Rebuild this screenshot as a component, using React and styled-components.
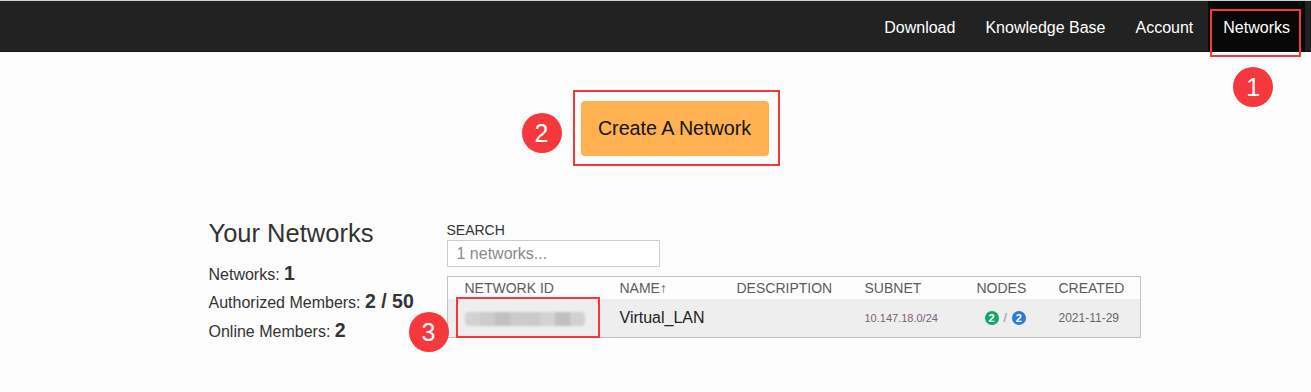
import React from 'react'
import styled, { createGlobalStyle } from 'styled-components'

const GlobalStyle = createGlobalStyle`
  html, body {
    margin: 0;
    padding: 0;
    background: #fcfcfc;
    font-family: 'Liberation Sans', Arial, sans-serif;
    color: #333;
  }
  body {
    min-height: 100vh;
  }
`

const NavBar = styled.nav`
  display: flex;
  justify-content: flex-end;
  height: 50px;
  padding-right: 6px;
  background: #222;
  border-top: 1px solid #cfcfcf;
  border-bottom: 1px solid #111;
`

const NavItem = styled.a`
  position: relative;
  display: flex;
  align-items: center;
  padding: 3px 15px 0;
  font-size: 16px;
  color: #fff;
  text-decoration: none;
  background: ${p => (p.$active ? '#080808' : 'transparent')};
`

// annotation overlay: red frame + numbered badge
const Mark = styled.div`
  position: relative;
  display: inline-flex;
  justify-self: start;
`

const Frame = styled.div`
  position: absolute;
  z-index: 2;
  top: ${p => p.$t}px;
  left: ${p => p.$l}px;
  right: ${p => p.$r}px;
  bottom: ${p => p.$b}px;
  border: 2px solid #f2383a;
  pointer-events: none;
`

const Badge = styled.div`
  position: absolute;
  z-index: 2;
  left: ${p => p.$x - 20}px;
  top: ${p => p.$y - 20}px;
  width: 40px;
  height: 40px;
  border-radius: 50%;
  background: #f5383b;
  color: #fff;
  font-size: 25px;
  line-height: 40px;
  text-align: center;
`

const Hero = styled.section`
  display: flex;
  justify-content: center;
  padding: 49px 0 0 38px;
`

const CreateButton = styled.button`
  width: 188px;
  height: 55px;
  border: none;
  border-radius: 4px;
  background: #ffb152;
  color: #141414;
  font-family: inherit;
  font-size: 19.7px;
  cursor: pointer;
`

const Main = styled.main`
  display: flex;
  justify-content: center;
  padding: 63px 0 40px 38px;
`

const Content = styled.div`
  display: flex;
  width: 932px;
`

const Summary = styled.div`
  width: 238px;
`

const Title = styled.h2`
  margin: 0 0 12px;
  font-size: 25.5px;
  font-weight: normal;
  color: #333;
`

const Stat = styled.div`
  font-size: 16px;
  line-height: 27.25px;
  color: #333;

  b {
    font-size: 19.5px;
  }
`

const ListArea = styled.div`
  width: 694px;
`

const SearchLabel = styled.label`
  display: block;
  font-size: 14px;
  line-height: 16px;
  margin: 3px 0 2px;
  color: #333;
`

const SearchInput = styled.input`
  box-sizing: border-box;
  width: 213px;
  height: 27px;
  padding: 0 9px;
  border: 1px solid #ccc;
  background: #fff;
  font-family: inherit;
  font-size: 16px;
  color: #333;

  &::placeholder {
    color: #8a8a8a;
  }
`

const Table = styled.div`
  margin-top: 9px;
  border: 1px solid #c2c2c2;
`

const Row = styled.div`
  display: grid;
  grid-template-columns: 155px 117px 128px 112px 82px 1fr;
  align-items: center;
  padding-left: 17px;
  height: ${p => (p.$head ? 22 : 38)}px;
  background: ${p => (p.$head ? '#fdfdfd' : '#eeeeee')};
`

const HeadCell = styled.div`
  font-size: 14px;
  color: #5c5c5c;
  text-transform: uppercase;
`

const Cell = styled.div`
  font-size: ${p => p.$size || 16}px;
  color: ${p => p.$color || '#222'};
`

const BlurId = styled.div`
  display: flex;
  width: 120px;
  height: 14px;
  border-radius: 4px;
  overflow: hidden;
  filter: blur(1px);
  margin-top: 2px;
`

const BlurBit = styled.span`
  flex: 1;
  background: ${p => p.$c};
`

const Nodes = styled.div`
  display: flex;
  align-items: center;
  gap: 5px;
  padding-left: 8px;
  font-size: 12px;
  color: #888;
`

const NodeCount = styled.span`
  width: 14px;
  height: 14px;
  border-radius: 50%;
  background: ${p => p.$c};
  color: #fff;
  font-size: 11px;
  font-weight: bold;
  line-height: 14px;
  text-align: center;
`

const idShades = ['#d2d2d2', '#cccccc', '#c1c1c1', '#cbcbcb', '#cacaca', '#d3d3d3', '#c1bfbf', '#d1d1d1']

export default function App() {
  return (
    <>
      <GlobalStyle />
      <NavBar>
        <NavItem href="#">Download</NavItem>
        <NavItem href="#">Knowledge Base</NavItem>
        <NavItem href="#">Account</NavItem>
        <NavItem href="#" $active>
          Networks
          <Frame $t={8} $l={2} $r={4} $b={-6} />
          <Badge $x={45} $y={86}>1</Badge>
        </NavItem>
      </NavBar>

      <Hero>
        <Mark>
          <CreateButton>Create A Network</CreateButton>
          <Frame $t={-11} $l={-8} $r={-11} $b={-10} />
          <Badge $x={-39} $y={32}>2</Badge>
        </Mark>
      </Hero>

      <Main>
        <Content>
          <Summary>
            <Title>Your Networks</Title>
            <Stat>Networks: <b>1</b></Stat>
            <Stat>Authorized Members: <b>2 / 50</b></Stat>
            <Stat>Online Members: <b>2</b></Stat>
          </Summary>
          <ListArea>
            <SearchLabel>SEARCH</SearchLabel>
            <SearchInput placeholder="1 networks..." />
            <Table>
              <Row $head>
                <HeadCell>Network ID</HeadCell>
                <HeadCell>Name↑</HeadCell>
                <HeadCell>Description</HeadCell>
                <HeadCell>Subnet</HeadCell>
                <HeadCell>Nodes</HeadCell>
                <HeadCell>Created</HeadCell>
              </Row>
              <Row>
                <Mark>
                  <BlurId>
                    {idShades.map((c, i) => <BlurBit key={i} $c={c} />)}
                  </BlurId>
                  <Frame $t={-13} $l={-9} $r={-15} $b={-12} />
                  <Badge $x={-36} $y={22}>3</Badge>
                </Mark>
                <Cell>Virtual_LAN</Cell>
                <Cell />
                <Cell $size={11} $color="#7c627a">10.147.18.0/24</Cell>
                <Nodes>
                  <NodeCount $c="#17a36f">2</NodeCount>/
                  <NodeCount $c="#2d7bd9">2</NodeCount>
                </Nodes>
                <Cell $size={12} $color="#666">2021-11-29</Cell>
              </Row>
            </Table>
          </ListArea>
        </Content>
      </Main>
    </>
  )
}
